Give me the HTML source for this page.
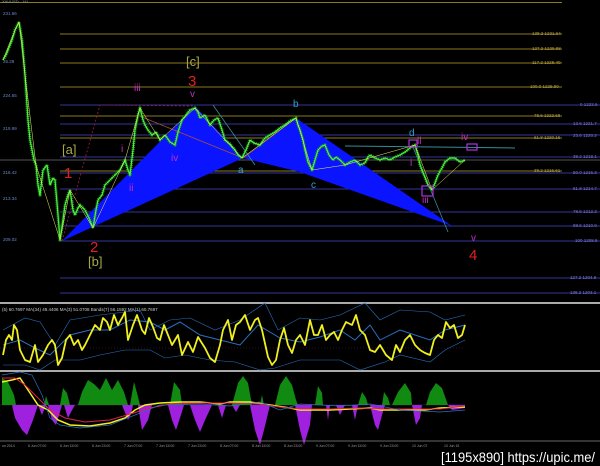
<!DOCTYPE html><html><head><meta charset="utf-8"><style>html,body{margin:0;padding:0;background:#000;width:600px;height:466px;overflow:hidden}svg{display:block}text{font-family:"Liberation Sans",sans-serif}</style></head><body>
<svg width="600" height="466" viewBox="0 0 600 466" xmlns="http://www.w3.org/2000/svg">
<rect width="600" height="466" fill="#000"/>
<g stroke-width="1">
<line x1="0" y1="2.5" x2="562" y2="2.5" stroke="#8a7a20"/>
<g stroke="#8a7a20"><line x1="60" y1="34" x2="562" y2="34"/><line x1="60" y1="49" x2="562" y2="49"/><line x1="60" y1="63" x2="562" y2="63"/><line x1="60" y1="87" x2="562" y2="87"/><line x1="60" y1="116" x2="562" y2="116"/><line x1="60" y1="138" x2="562" y2="138"/><line x1="60" y1="171" x2="562" y2="171"/></g>
<g stroke="#34349a"><line x1="60" y1="105" x2="600" y2="105"/><line x1="60" y1="124" x2="600" y2="124"/><line x1="60" y1="135" x2="600" y2="135"/><line x1="60" y1="157" x2="600" y2="157"/><line x1="60" y1="173" x2="600" y2="173"/><line x1="60" y1="189" x2="600" y2="189"/><line x1="60" y1="212" x2="600" y2="212"/><line x1="60" y1="226" x2="600" y2="226"/><line x1="60" y1="241" x2="600" y2="241"/><line x1="60" y1="278" x2="600" y2="278"/><line x1="60" y1="293" x2="600" y2="293"/></g>
<line x1="0" y1="160" x2="600" y2="160" stroke="#555"/>
<line x1="345" y1="146" x2="515" y2="148" stroke="#3a8a9a"/>
</g>
<g font-size="4.5" fill="#b8a040"><text x="532" y="35">138.2 1231.64</text><text x="532" y="50">127.2 1229.98</text><text x="532" y="64">117.2 1228.40</text><text x="530" y="88">100.0 1225.90</text><text x="534" y="117">78.6 1222.68</text><text x="534" y="139">61.8 1220.16</text><text x="534" y="172">38.2 1216.61</text></g>
<g font-size="4.5" fill="#7a7ad8"><text x="580" y="106">0 1223.6</text><text x="573" y="125">13.6 1221.7</text><text x="573" y="137">23.6 1220.2</text><text x="573" y="158">38.2 1218.1</text><text x="573" y="174">50.0 1216.3</text><text x="573" y="190">61.8 1214.7</text><text x="573" y="213">78.6 1212.3</text><text x="573" y="227">88.6 1210.9</text><text x="575" y="242">100 1208.8</text><text x="570" y="279">127.2 1204.8</text><text x="570" y="294">138.2 1203.1</text></g>
<g font-size="4.5" fill="#6a8ac8"><text x="3" y="15">231.66</text><text x="3" y="63">26.28</text><text x="3" y="97">224.65</text><text x="3" y="130">219.99</text><text x="3" y="174">216.42</text><text x="3" y="200">213.34</text><text x="3" y="241">209.02</text></g>
<text x="2" y="3" font-size="4" fill="#999">XAUUSD... H1 ... ...</text>
<polygon points="62,241 195,106 243,158" fill="#0a14ff"/>
<polygon points="243,158 296,118 452,226 300,172" fill="#0a14ff"/>
<g fill="none" stroke-width="0.8"><polyline points="62,241 100,105 195,106" stroke="#a02040" stroke-dasharray="2,2"/><polyline points="137,115 243,158 296,118" stroke="#a05040"/><line x1="213" y1="105" x2="255" y2="165" stroke="#3a8a9a"/><line x1="412" y1="145" x2="448" y2="232" stroke="#3a8a9a"/></g>
<g fill="none" stroke-linejoin="round">
<polyline id="p" stroke="#18a018" stroke-width="3.2" stroke-dasharray="1,1" points="3,60 6,55 8,50 12,40 15,30 19,22 22,40 25,75 28,120 30,140 32,150 34,160 36,165 38,185 40,195 43,170 47,165 50,185 53,178 55,180 58,215 60,240 63,220 65,205 68,195 70,190 73,210 75,215 78,208 80,205 85,210 89,218 93,228 96,210 98,200 102,195 105,185 110,180 115,175 120,170 125,160 128,170 130,175 133,150 135,130 138,115 140,108 143,120 145,125 148,130 152,135 156,132 160,140 165,135 170,142 175,145 178,132 182,120 186,115 190,110 195,108 198,112 200,118 205,115 210,125 214,120 218,118 222,130 225,140 230,144 235,150 238,155 242,158 246,150 250,140 254,143 260,145 265,138 270,135 275,132 280,128 285,125 290,121 296,118 298,125 300,130 303,140 305,150 308,162 312,170 315,160 318,150 322,146 325,145 329,155 333,160 336,157 340,160 345,165 350,162 355,160 360,165 365,163 368,157 370,155 375,158 380,160 385,158 390,160 395,157 400,155 405,152 410,148 413,146 415,145 418,155 420,165 424,175 428,185 432,190 435,183 438,175 442,168 445,162 450,158 455,158 460,162 465,160"/>
<polyline stroke="#50f040" stroke-width="1.2" points="3,60 6,55 8,50 12,40 15,30 19,22 22,40 25,75 28,120 30,140 32,150 34,160 36,165 38,185 40,195 43,170 47,165 50,185 53,178 55,180 58,215 60,240 63,220 65,205 68,195 70,190 73,210 75,215 78,208 80,205 85,210 89,218 93,228 96,210 98,200 102,195 105,185 110,180 115,175 120,170 125,160 128,170 130,175 133,150 135,130 138,115 140,108 143,120 145,125 148,130 152,135 156,132 160,140 165,135 170,142 175,145 178,132 182,120 186,115 190,110 195,108 198,112 200,118 205,115 210,125 214,120 218,118 222,130 225,140 230,144 235,150 238,155 242,158 246,150 250,140 254,143 260,145 265,138 270,135 275,132 280,128 285,125 290,121 296,118 298,125 300,130 303,140 305,150 308,162 312,170 315,160 318,150 322,146 325,145 329,155 333,160 336,157 340,160 345,165 350,162 355,160 360,165 365,163 368,157 370,155 375,158 380,160 385,158 390,160 395,157 400,155 405,152 410,148 413,146 415,145 418,155 420,165 424,175 428,185 432,190 435,183 438,175 442,168 445,162 450,158 455,158 460,162 465,160"/>
</g>
<polyline fill="none" stroke="#f0f060" stroke-width="0.5" points="3,60 15,30 19,22 25,75 36,165 60,240 70,190 93,228 125,160 140,108 160,140 195,108 242,158 296,118 312,170 345,165 415,145 432,190 465,160"/>
<g font-size="15" fill="#e02020"><text x="64" y="178">1</text><text x="90" y="252">2</text><text x="188" y="86">3</text><text x="469" y="260">4</text></g>
<g font-size="13" fill="#a8a840"><text x="62" y="154">[a]</text><text x="88" y="266">[b]</text><text x="186" y="66">[c]</text></g>
<g font-size="10" fill="#c030c0"><text x="134" y="91">iii</text><text x="190" y="97">v</text><text x="121" y="152">i</text><text x="129" y="191">ii</text><text x="171" y="161">iv</text><text x="417" y="144">ii</text><text x="410" y="166">i</text><text x="422" y="203">iii</text><text x="461" y="140">iv</text><text x="471" y="241">v</text></g>
<g font-size="10" fill="#30a0d0"><text x="238" y="173">a</text><text x="293" y="107">b</text><text x="311" y="188">c</text><text x="409" y="136">d</text></g>
<g fill="none" stroke="#b030e0" stroke-width="1.2"><rect x="409" y="140" width="8" height="7"/><rect x="422" y="186" width="11" height="10"/><rect x="467" y="144" width="10" height="6"/></g>
<rect x="0" y="302" width="600" height="2" fill="#aaa"/>
<rect x="0" y="370" width="600" height="2" fill="#aaa"/>
<text x="2" y="311" font-size="4.5" fill="#ccc">(5) 60.7697   MA(34) 49.4406   MA(3) 51.0708   Bands(7) 56.1592   MA(1) 60.7697</text>
<line x1="0" y1="348" x2="465" y2="348" stroke="#602030" stroke-dasharray="1,2" stroke-width="0.6"/>
<polyline fill="none" stroke="#2a70c0" stroke-width="1" points="3,345 20,340 35,348 50,355 70,335 90,330 110,330 130,320 150,322 165,330 180,322 200,335 220,340 240,345 258,325 280,338 300,342 320,337 340,330 355,340 370,325 380,340 400,330 430,340 445,330 465,325"/>
<polyline fill="none" stroke="#2a70c0" stroke-width="0.6" points="3,330 25,318 40,322 55,345 70,320 100,315 125,312 140,310 150,330 170,320 190,318 215,330 240,320 265,303 278,330 300,318 320,320 340,315 365,303 380,320 400,310 430,312 445,320 465,315"/>
<polyline fill="none" stroke="#2a70c0" stroke-width="0.6" points="3,365 25,365 40,370 55,360 80,360 100,355 125,350 150,350 165,358 185,355 210,360 235,362 260,370 275,368 300,360 320,360 340,360 360,370 385,362 400,355 430,362 445,350 465,340"/>
<polyline fill="none" stroke="#f0f020" stroke-width="1.8" stroke-linejoin="round" points="3,355 6,340 9,335 12,340 14,325 17,330 20,350 25,360 30,362 35,345 38,362 43,355 48,345 52,340 55,345 58,365 62,358 66,340 70,335 74,345 78,340 82,350 85,345 90,335 95,325 100,330 103,318 107,322 110,330 114,315 118,325 122,318 125,312 128,340 133,325 137,315 142,330 145,334 149,318 153,327 157,338 160,340 164,325 168,335 172,345 178,335 182,355 188,342 193,352 198,337 205,348 210,358 215,362 220,345 223,330 228,320 232,340 236,325 240,322 245,315 250,330 255,320 258,318 262,330 268,357 272,365 276,360 280,340 284,328 288,345 292,353 296,340 300,335 305,345 310,320 314,335 318,335 322,325 326,340 330,335 334,332 338,340 342,330 346,322 352,325 356,315 360,330 365,335 370,350 375,352 380,345 386,355 392,360 396,345 400,352 405,340 410,335 415,345 420,350 425,353 430,355 434,340 438,335 442,338 446,322 450,328 454,325 458,338 462,335 465,325"/>
<line x1="0" y1="405" x2="465" y2="405" stroke="#333" stroke-width="0.5"/>
<path fill="#108a10" d="M2,405 L2,378 8,382 14,395 16,405Z M44,405 L46,396 49,405Z M60,405 L63,388 67,393 70,405Z M78,405 L82,392 88,380 94,384 100,390 106,378 112,390 118,380 124,392 128,405Z M115,405 L118,395 120,405Z M130,405 L134,382 137,393 140,405Z M170,405 L174,382 180,390 182,405Z M232,405 L238,383 243,376 248,383 252,405Z M260,405 L262,395 264,405Z M275,405 L280,385 286,376 292,385 296,400 298,405Z M315,405 L318,386 322,393 323,405Z M358,405 L362,392 366,398 368,405Z M382,405 L384,392 388,398 390,405Z M392,405 L398,392 405,383 411,393 412,405Z M426,405 L430,392 436,383 442,388 448,405Z"/>
<path fill="#a020e0" d="M12,405 L15,418 22,430 27,435 33,420 38,405Z M38,405 L42,415 46,405Z M48,405 L52,420 56,425 60,412 62,405Z M64,405 L68,418 72,410 75,405Z M122,405 L128,420 131,414 133,405Z M138,405 L142,430 148,420 152,405Z M168,405 L172,420 176,430 180,418 184,405Z M190,405 L195,420 200,432 205,420 212,405Z M218,405 L222,418 226,405Z M232,405 L236,412 240,405Z M250,405 L255,430 260,445 264,430 270,405Z M295,405 L300,430 304,445 310,425 312,405Z M326,405 L328,420 330,405Z M336,405 L340,415 345,405Z M352,405 L355,420 358,405Z M370,405 L375,425 378,430 382,415 385,405Z M412,405 L416,425 420,418 422,405Z M448,405 L452,410 465,408 465,405Z"/>
<polyline fill="none" stroke="#f0f020" stroke-width="1.5" points="2,382 12,380 20,378 28,390 38,405 48,410 58,420 70,425 90,426 110,423 125,418 135,410 145,405 160,403 180,402 200,402 220,404 230,402 250,402 270,405 290,408 300,410 315,410 330,410 350,409 370,408 380,410 395,410 410,410 425,410 440,408 465,407"/>
<polyline fill="none" stroke="#e02050" stroke-width="1" points="2,378 15,378 25,385 35,395 50,410 65,418 85,422 110,420 130,414 150,408 170,404 200,403 230,403 260,404 280,407 300,409 330,409 360,408 380,409 410,409 440,409 465,406"/>
<polyline fill="none" stroke="#2a70c0" stroke-width="0.7" points="2,375 20,372 32,375 42,395 50,418 60,425 80,428 110,425 140,413 160,405 200,404 230,406 260,402 280,410 300,404 340,406 370,404 400,410 440,412 465,410"/>
<line x1="0" y1="441" x2="600" y2="441" stroke="#888" stroke-width="0.8"/>
<g font-size="3.5" fill="#999"><text x="2" y="447">un 2014</text><text x="28" y="447">6 Jun 07:00</text><text x="60" y="447">6 Jun 15:00</text><text x="92" y="447">6 Jun 23:00</text><text x="124" y="447">7 Jun 07:00</text><text x="156" y="447">7 Jun 15:00</text><text x="188" y="447">7 Jun 23:00</text><text x="220" y="447">8 Jun 07:00</text><text x="252" y="447">8 Jun 15:00</text><text x="284" y="447">8 Jun 23:00</text><text x="316" y="447">9 Jun 07:00</text><text x="348" y="447">9 Jun 15:00</text><text x="380" y="447">9 Jun 23:00</text><text x="412" y="447">10 Jun 07</text><text x="444" y="447">10 Jun 15</text></g>
<text x="441" y="462" font-size="14" fill="#fff" textLength="154" lengthAdjust="spacingAndGlyphs">[1195x890] https://upic.me/</text>
</svg>
</body></html>
